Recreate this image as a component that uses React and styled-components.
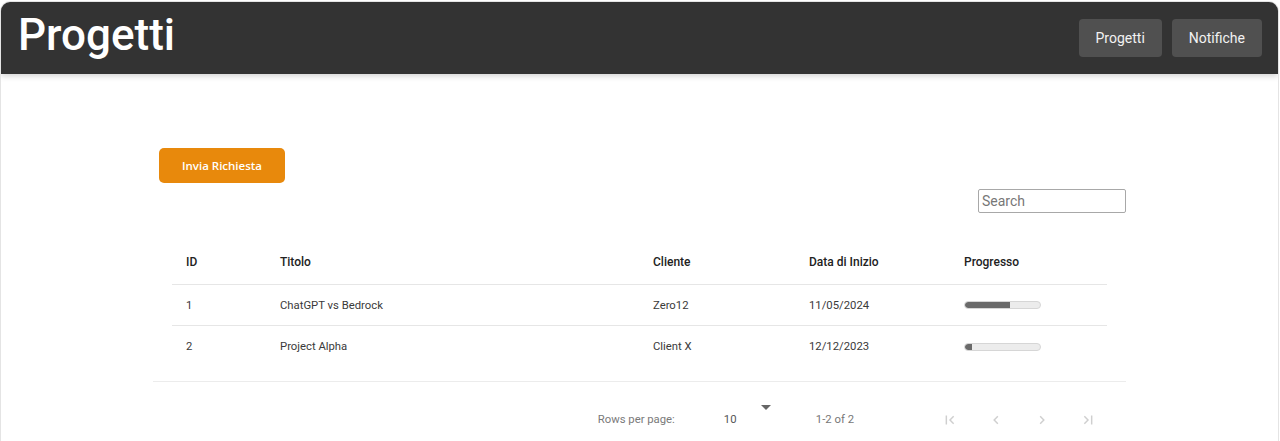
import React from "react";
import styled, { createGlobalStyle } from "styled-components";

const Global = createGlobalStyle`
  html, body { margin: 0; padding: 0; background: #fff; }
  body { font-family: Roboto, "Noto Sans", sans-serif; }
  * { box-sizing: border-box; }
`;

const Card = styled.div`
  margin: 1px 1px 0 0;
  height: 441px;
  border: 1px solid #e4e4e4;
  border-bottom: none;
  border-radius: 10px 10px 0 0;
  overflow: hidden;
  background: #fff;
`;

const Header = styled.header`
  height: 72px;
  background: #333333;
  display: flex;
  align-items: center;
  justify-content: space-between;
  padding: 0 16px 0 17px;
  box-shadow: 0 2px 6px rgba(0, 0, 0, 0.18);
  position: relative;
  z-index: 1;
`;

const Title = styled.h1`
  margin: 0;
  color: #fff;
  font-family: Roboto, sans-serif;
  font-weight: 500;
  font-size: 44px;
  line-height: 1;
  margin-top: -6px;
`;

const Nav = styled.nav`
  display: flex;
  gap: 10px;
`;

const NavButton = styled.button`
  height: 38px;
  padding: 0 17px;
  border: none;
  border-radius: 4px;
  background: #505050;
  color: #f2f2f2;
  font-family: Roboto, sans-serif;
  font-size: 14px;
  cursor: pointer;
`;

const Main = styled.main`
  width: 973px;
  margin: 0 auto;
  padding-top: 74px;
`;

const ActionButton = styled.button`
  margin-left: 6px;
  width: 126px;
  height: 35px;
  border: none;
  border-radius: 5px;
  background: #e8890c;
  color: #fff;
  font-family: "Open Sans", sans-serif;
  font-weight: 600;
  font-size: 11.5px;
  cursor: pointer;
`;

const SearchRow = styled.div`
  display: flex;
  justify-content: flex-end;
  margin-top: 6px;
`;

const SearchInput = styled.input`
  width: 148px;
  height: 24px;
  border: 1px solid #a8a8a8;
  border-radius: 2px;
  padding: 0 3px;
  font-family: Roboto, sans-serif;
  font-size: 14px;
  color: #333;
  &::placeholder { color: #777; }
`;

const TableWrap = styled.div`
  margin-top: 27px;
  padding: 0 19px 14px;
`;

const Row = styled.div`
  display: grid;
  grid-template-columns: 94px 373px 156px 155px 157px;
  align-items: center;
  height: ${(p) => (p.$head ? "45px" : "41px")};
  border-bottom: ${(p) => (p.$last ? "none" : "1px solid #e6e6e6")};
  padding-bottom: ${(p) => (p.$head ? "1px" : "0")};
`;

const Cell = styled.div`
  padding-left: 14px;
  font-family: Roboto, sans-serif;
  font-size: ${(p) => (p.$head ? "12px" : "11.3px")};
  font-weight: ${(p) => (p.$head ? 500 : 400)};
  color: ${(p) => (p.$head ? "#222" : "#3a3a3a")};
`;

const Bar = styled.div`
  width: 77px;
  height: 8px;
  border-radius: 4px;
  background: #ececec;
  border: 1px solid #d6d6d6;
  overflow: hidden;
`;

const Fill = styled.div`
  height: 100%;
  background: #6a6a6a;
  border-radius: 4px 0 0 4px;
`;

const Pagination = styled.div`
  border-top: 1px solid #ececec;
  height: 76px;
  display: flex;
  align-items: center;
  justify-content: flex-end;
  padding: 0 18px 0 0;
  font-family: Roboto, sans-serif;
  font-size: 11.3px;
  color: #7a7a7a;
`;

const Label = styled.span`
  margin-right: 49px;
`;

const Select = styled.div`
  position: relative;
  width: 58px;
  color: #555;
  margin-right: 34px;
`;

const Arrow = styled.span`
  position: absolute;
  left: 37px;
  top: -8px;
  width: 0;
  height: 0;
  border-left: 5px solid transparent;
  border-right: 5px solid transparent;
  border-top: 5px solid #666;
`;

const Range = styled.span`
  color: #777;
  margin-right: 70px;
`;

const PageBtn = styled.button`
  width: 40px;
  height: 40px;
  margin-left: 6px;
  border: none;
  background: transparent;
  display: flex;
  align-items: center;
  justify-content: center;
  padding: 0;
  color: #cfcfcf;
`;

const Icon = ({ d }) => (
  <svg width="22" height="22" viewBox="0 0 24 24" fill="none" stroke="currentColor" strokeWidth="1.6">
    <path d={d} />
  </svg>
);

const rows = [
  { id: 1, title: "ChatGPT vs Bedrock", client: "Zero12", date: "11/05/2024", pct: 60 },
  { id: 2, title: "Project Alpha", client: "Client X", date: "12/12/2023", pct: 9 },
];

export default function App() {
  return (
    <>
      <Global />
      <Card>
        <Header>
          <Title>Progetti</Title>
          <Nav>
            <NavButton>Progetti</NavButton>
            <NavButton>Notifiche</NavButton>
          </Nav>
        </Header>
        <Main>
          <ActionButton>Invia Richiesta</ActionButton>
          <SearchRow>
            <SearchInput placeholder="Search" />
          </SearchRow>
          <TableWrap>
            <Row $head>
              <Cell $head>ID</Cell>
              <Cell $head>Titolo</Cell>
              <Cell $head>Cliente</Cell>
              <Cell $head>Data di Inizio</Cell>
              <Cell $head>Progresso</Cell>
            </Row>
            {rows.map((r, i) => (
              <Row key={r.id} $last={i === rows.length - 1}>
                <Cell>{r.id}</Cell>
                <Cell>{r.title}</Cell>
                <Cell>{r.client}</Cell>
                <Cell>{r.date}</Cell>
                <Cell>
                  <Bar>
                    <Fill style={{ width: `${r.pct}%` }} />
                  </Bar>
                </Cell>
              </Row>
            ))}
          </TableWrap>
          <Pagination>
            <Label>Rows per page:</Label>
            <Select>
              10
              <Arrow />
            </Select>
            <Range>1-2 of 2</Range>
            <PageBtn><Icon d="M8 7v10M16 8l-4 4 4 4" /></PageBtn>
            <PageBtn><Icon d="M14 8l-4 4 4 4" /></PageBtn>
            <PageBtn><Icon d="M10 8l4 4-4 4" /></PageBtn>
            <PageBtn><Icon d="M8 8l4 4-4 4M16 7v10" /></PageBtn>
          </Pagination>
        </Main>
      </Card>
    </>
  );
}
